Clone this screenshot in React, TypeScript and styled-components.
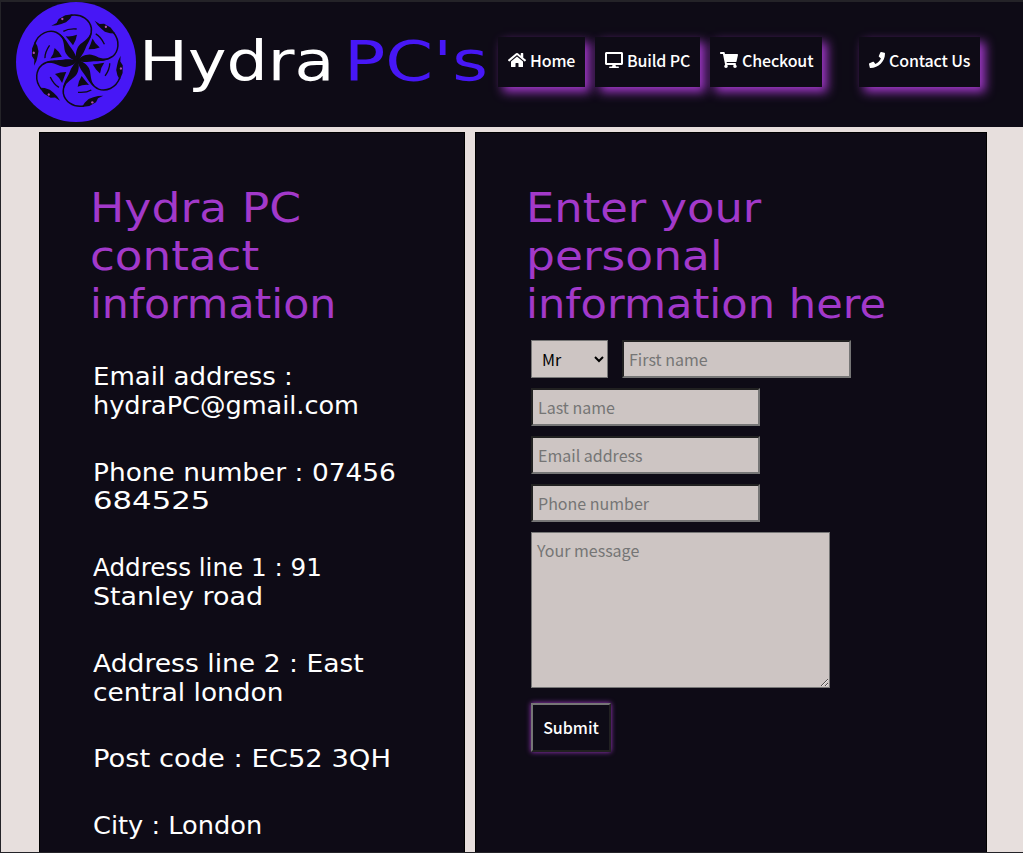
import React from "react";
import styled, { createGlobalStyle } from "styled-components";
import { FaHome, FaDesktop, FaShoppingCart, FaPhone } from "react-icons/fa";

const ink = "#0e0b16";
const violet = "#a239ca";
const blue = "#4717f6";
const paper = "#e7dfdd";
const field = "#cdc5c3";

const Global = createGlobalStyle`
  *, *::before, *::after { box-sizing: border-box; }
  body {
    margin: 0;
    overflow: hidden;
    background: ${paper};
    font-family: "Noto Sans CJK JP", "Noto Sans", sans-serif;
    font-size: 16px;
  }
`;

const Page = styled.div`
  height: 853px;
  overflow: hidden;
  border: solid #242328;
  border-width: 2px 0 1px 1px;
  background: ${paper};
`;

const Header = styled.header`
  display: flex;
  height: 125px;
  padding-left: 15px;
  background: ${ink};
`;

const Logo = styled.svg`
  width: 120px;
  height: 120px;
  flex: none;
`;

const Brand = styled.div`
  display: flex;
  width: 362px;
  padding: 27px 0 0 3px;
  flex: none;
  font-family: "DejaVu Sans", sans-serif;
  font-size: 56px;
  line-height: 64px;
`;

const BrandWord = styled.span<{ $w: number; $stretch: number; $blue?: boolean }>`
  display: block;
  width: ${(p) => p.$w}px;
  white-space: nowrap;
  color: ${(p) => (p.$blue ? blue : "#fff")};
  transform: scaleX(${(p) => p.$stretch});
  transform-origin: left;
`;

const Nav = styled.nav`
  display: flex;
  align-items: flex-start;
  gap: 10px;
  padding-top: 35px;
`;

const NavLink = styled.a<{ $w: number; $last?: boolean }>`
  display: flex;
  align-items: center;
  gap: 4px;
  width: ${(p) => p.$w}px;
  height: 50px;
  padding: 0 0 5px 10px;
  margin-left: ${(p) => (p.$last ? 27 : 0)}px;
  background: ${ink};
  box-shadow: 5px 5px 10px ${violet};
  color: #fff;
  font-weight: 500;
  letter-spacing: -0.15px;
  white-space: nowrap;

  svg {
    flex: none;
    width: ${(p) => (p.$last ? 16 : 18)}px;
    height: 16px;
  }
`;

const Columns = styled.main`
  display: flex;
  gap: 10px;
  padding: 5px 0 0 38px;
`;

const Panel = styled.section<{ $w: number }>`
  width: ${(p) => p.$w}px;
  height: 760px;
  padding: 51px 0 0 50px;
  border: 1px solid #000;
  background: ${ink};
`;

const Title = styled.h1`
  margin: 0;
  font-family: "DejaVu Sans", sans-serif;
  font-size: 40px;
  line-height: 48px;
  font-weight: 400;
  color: ${violet};
`;

const Line = styled.span<{ $stretch: number }>`
  display: block;
  width: max-content;
  white-space: nowrap;
  transform: scaleX(${(p) => p.$stretch});
  transform-origin: left;
`;

const Details = styled.div`
  display: flex;
  flex-direction: column;
  gap: 38px;
  padding: 35px 0 0 3px;
`;

const Detail = styled.p`
  margin: 0;
  font-family: "DejaVu Sans", sans-serif;
  font-size: 24px;
  line-height: 28.8px;
  color: #fff;
`;

const Form = styled.form`
  display: flex;
  flex-direction: column;
  align-items: flex-start;
  gap: 10px;
  padding: 12px 0 0 5px;
`;

const Row = styled.div`
  display: flex;
  gap: 14px;
`;

const Select = styled.select`
  width: 77px;
  height: 38px;
  padding: 5px 5px 5px 6px;
  border: 1px solid #767676;
  border-radius: 0;
  background: ${field};
  color: #000;
  font: inherit;
`;

const Input = styled.input`
  width: 229px;
  height: 38px;
  padding: 5px;
  border: 2px inset #767676;
  background: ${field};
  font: inherit;
  &::placeholder { color: #757575; }
`;

const Message = styled.textarea`
  display: block;
  width: 299px;
  height: 156px;
  padding: 5px;
  border: 1px solid #767676;
  background: ${field};
  font: inherit;
  &::placeholder { color: #757575; }
`;

const Submit = styled.button`
  width: 80px;
  height: 49px;
  margin-top: 5px;
  padding: 0 0 2px;
  border: 2px outset #767676;
  background: ${ink};
  box-shadow: 0 0 5px ${violet};
  color: #fff;
  font: inherit;
  font-weight: 500;
`;

function Snake({ angle }: { angle: number }) {
  return (
    <g transform={`rotate(${angle})`}>
      <path
        d="M-20-136C15-142 38-120 42-98C44-84 40-76 36-68"
        fill="none"
        stroke={ink}
        strokeWidth="4.5"
      />
      <path d="M-78-105L-62-113L-56-125L-36-136L-14-139L-22-126L-34-115L-48-110L-62-106Z" fill={ink} />
      <path d="M43-86C42-64 30-52 24-36C18-19 8-9 0 2C-7-12-5-28 2-41C10-54 26-58 37-76Z" fill={ink} />
      <path d="M-35-73Q-18-71-1-78L-5-62L-13-46L-23-59Z" fill={ink} />
      <path d="M-42-88Q-27-97-2-95" fill="none" stroke={ink} strokeWidth="4" />
      <circle cx="-45" cy="-125" r="3.5" fill="#b04bb0" />
    </g>
  );
}

function ContactDetail({ lines }: { lines: [string, number][] }) {
  return (
    <Detail>
      {lines.map(([text, stretch]) => (
        <Line key={text} $stretch={stretch}>{text}</Line>
      ))}
    </Detail>
  );
}

const contact: [string, number][][] = [
  [["Email address :", 1.085], ["hydraPC@gmail.com", 1.064]],
  [["Phone number : 07456", 1.1], ["684525", 1.28]],
  [["Address line 1 : 91", 1.025], ["Stanley road", 1.12]],
  [["Address line 2 : East", 1.107], ["central london", 1.1]],
  [["Post code : EC52 3QH", 1.14]],
  [["City : London", 1.068]],
];

export default function App() {
  return (
    <Page>
      <Global />
      <Header>
        <Logo viewBox="-180 -180 360 360">
          <circle r="180" fill={blue} />
          <g transform="translate(4 -4)">
            {[0, 60, 120, 180, 240, 300].map((a) => (
              <Snake key={a} angle={a} />
            ))}
          </g>
        </Logo>
        <Brand>
          <BrandWord $w={205} $stretch={1.162}>Hydra</BrandWord>
          <BrandWord $w={140} $stretch={1.225} $blue>PC's</BrandWord>
        </Brand>
        <Nav>
          <NavLink $w={87}><FaHome />Home</NavLink>
          <NavLink $w={105}><FaDesktop />Build PC</NavLink>
          <NavLink $w={112}><FaShoppingCart />Checkout</NavLink>
          <NavLink $w={121} $last><FaPhone />Contact Us</NavLink>
        </Nav>
      </Header>
      <Columns>
        <Panel $w={426}>
          <Title>
            <Line $stretch={1.142}>Hydra PC</Line>
            <Line $stretch={1.13}>contact</Line>
            <Line $stretch={1.067}>information</Line>
          </Title>
          <Details>
            {contact.map((lines) => (
              <ContactDetail key={lines[0][0]} lines={lines} />
            ))}
          </Details>
        </Panel>
        <Panel $w={512}>
          <Title>
            <Line $stretch={1.12}>Enter your</Line>
            <Line $stretch={1.138}>personal</Line>
            <Line $stretch={1.079}>information here</Line>
          </Title>
          <Form>
            <Row>
              <Select defaultValue="Mr"><option>Mr</option></Select>
              <Input placeholder="First name" />
            </Row>
            <Input placeholder="Last name" />
            <Input placeholder="Email address" />
            <Input placeholder="Phone number" />
            <Message placeholder="Your message" />
            <Submit type="button">Submit</Submit>
          </Form>
        </Panel>
      </Columns>
    </Page>
  );
}
